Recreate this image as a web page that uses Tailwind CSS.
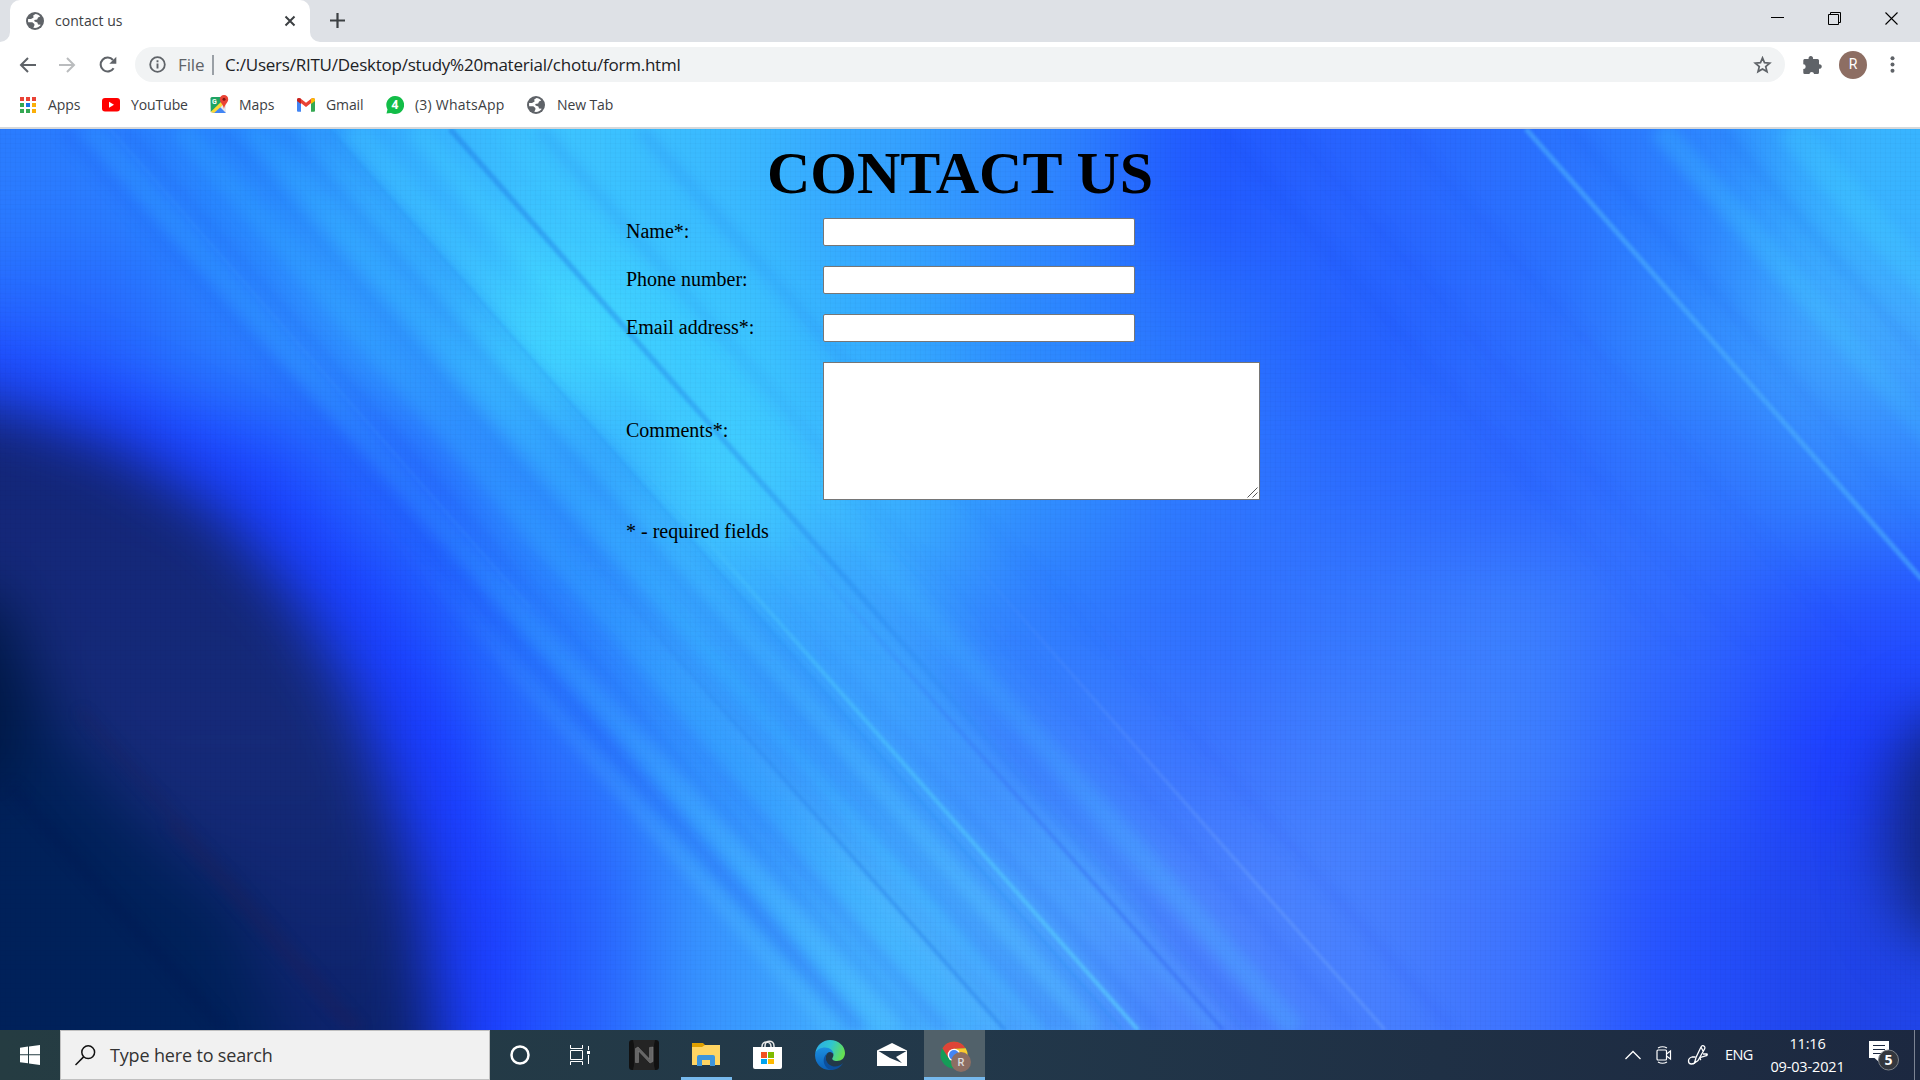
<!DOCTYPE html>
<html lang="en">
<head>
<meta charset="utf-8">
<title>contact us</title>
<script src="https://cdn.jsdelivr.net/npm/@tailwindcss/browser@4"></script>
</head>
<body class="w-[1920px] h-[1080px] overflow-hidden flex flex-col font-['Open_Sans',sans-serif] text-[#3c4043]">

<svg class="hidden">
  <symbol id="globe" viewBox="0 0 18 18">
    <circle cx="9" cy="9" r="9" fill="#5f6368"/>
    <path d="M9.5 2 7.2 3.6 7.6 5.4 5 7H2.1C2 8.2 2 9.2 2.2 10.2L6.3 10.3 8.4 12v1.6L7.3 15.8C10.6 16.4 13.4 15 14.8 12.8L12 12.4 11.4 10.4 8.6 9.6 8.2 8 11.2 7.4 12 5.6 14.2 4.4C13 3 11.3 2 9.5 2Z" fill="#fff"/>
  </symbol>
</svg>

<!-- Tab strip -->
<header class="h-[42px] shrink-0 bg-[#dee1e6] flex items-stretch justify-between">
  <div class="flex pl-[10px]">
    <div class="relative w-[300px] bg-white rounded-t-[10px] flex items-center pl-4 pr-[14px]">
      <svg class="absolute -left-[10px] bottom-0" width="10" height="10"><path d="M10 0V10H0A10 10 0 0 0 10 0Z" fill="#fff"/></svg>
      <svg class="absolute -right-[10px] bottom-0" width="10" height="10"><path d="M0 0V10H10A10 10 0 0 1 0 0Z" fill="#fff"/></svg>
      <svg width="18" height="18"><use href="#globe"/></svg>
      <span class="ml-[11px] -mt-[2px] text-[14px] tracking-[0.05px] whitespace-nowrap">contact us</span>
      <svg class="ml-auto" width="12" height="12" viewBox="0 0 12 12"><path d="M1.5 1.5l9 9M10.5 1.5l-9 9" stroke="#3c4043" stroke-width="2"/></svg>
    </div>
    <svg class="ml-5 mt-[13px]" width="15" height="15" viewBox="0 0 15 15"><path d="M7.5 0v15M0 7.5h15" stroke="#3c4043" stroke-width="2.2"/></svg>
  </div>
  <div class="flex gap-[44px] pr-[22px] pt-3">
    <svg width="13" height="13"><path d="M0 5.5h13" stroke="#000"/></svg>
    <svg width="13" height="13" fill="none" stroke="#000"><path d="M.5 2.5h10v10H.5zM2.500 2V.5h10v10H11"/></svg>
    <svg width="13" height="13" stroke="#000" stroke-width="1.1"><path d="M.5.5l12 12M12.5.5l-12 12"/></svg>
  </div>
</header>

<!-- Toolbar -->
<div class="h-[45px] shrink-0 bg-white flex items-center">
  <svg class="ml-[19px]" width="17" height="16" viewBox="0 0 17 16" fill="none" stroke="#5f6368" stroke-width="2"><path d="M17 8H2M9 1 2 8l7 7"/></svg>
  <svg class="ml-[23px]" width="17" height="16" viewBox="0 0 17 16" fill="none" stroke="#babcbe" stroke-width="2"><path d="M0 8h15M8 1l7 7-7 7"/></svg>
  <svg class="ml-[23px]" width="18" height="18" viewBox="0 0 18 18"><path d="M14.6 12.2A7 7 0 1 1 14 4" fill="none" stroke="#5f6368" stroke-width="2.1"/><path d="M17.3.8v7h-7z" fill="#5f6368"/></svg>
  <div class="ml-[18px] w-[1650px] h-[35px] rounded-full bg-[#f1f3f4] flex items-center pl-[14px] pr-[13px]">
    <svg width="17" height="17" viewBox="0 0 17 17"><circle cx="8.5" cy="8.5" r="7.3" fill="none" stroke="#5f6368" stroke-width="1.8"/><path d="M8.5 7.5v5M8.5 4.3v2" stroke="#5f6368" stroke-width="1.9"/></svg>
    <span class="ml-[12px] w-[26px] text-[17px] tracking-[-0.1px] text-[#5f6368]">File</span>
    <span class="ml-[8px] w-[2px] h-[20px] bg-[#9aa0a6]"></span>
    <span class="ml-[11px] text-[17px] tracking-[-0.230px] text-[#202124] whitespace-nowrap">C:/Users/RITU/Desktop/study%20material/chotu/form.html</span>
    <svg class="ml-auto" width="19" height="18" viewBox="0 0 19 18"><path d="M9.5 1.9 11.5 6.7l5.2.4-4 3.4 1.3 5.1-4.5-2.7L5 15.600l1.300-5.100-4-3.400 5.200-.4z" fill="none" stroke="#5f6368" stroke-width="1.7"/></svg>
  </div>
  <svg class="ml-[17px]" width="20" height="20" viewBox="0 0 20 20"><path d="M2 4h4.600a2.300 2.300 0 1 1 4.400 0h4.500a1.500 1.500 0 0 1 1.500 1.500v3.700a2.300 2.300 0 1 1 0 4.500v3.800a1.500 1.500 0 0 1-1.500 1.500h-3.400a2.400 2.400 0 0 0-4.700 0H3A1.500 1.500 0 0 1 1.300 17.500v-3.400a2.400 2.400 0 0 0 0-4.800V5.500A1.500 1.500 0 0 1 2.500 4z" fill="#5f6368"/></svg>
  <div class="ml-[17px] size-7 rounded-full bg-[#8d6e63] text-white text-[14px] font-['Roboto',sans-serif] flex items-center justify-center">R</div>
  <svg class="ml-[23px]" width="5" height="17" viewBox="0 0 5 17" fill="#5f6368"><circle cx="2.500" cy="2.200" r="2"/><circle cx="2.500" cy="8.500" r="2"/><circle cx="2.500" cy="14.800" r="2"/></svg>
</div>

<!-- Bookmarks -->
<nav class="h-[42px] shrink-0 bg-white border-b-2 border-[#d5d8db] flex items-center pb-[5px] pl-5 text-[14px] tracking-[-0.1px] whitespace-nowrap">
  <svg width="16" height="16" viewBox="0 0 16 16">
    <path d="M0 0h4v4H0zM6 0h4v4H6zM12 0h4v4h-4z" fill="#ea4335"/><path d="M0 6h4v4H0zM0 12h4v4H0zM6 12h4v4H6z" fill="#34a853"/><path d="M6 6h4v4H6z" fill="#1a73e8"/><path d="M12 6h4v4h-4zM12 12h4v4h-4z" fill="#fbaf08"/></svg>
  <span class="ml-3 w-[54px]">Apps</span>
  <svg width="18" height="14" viewBox="0 0 18 14"><rect width="18" height="13.500" rx="3" fill="#f00"/><path d="M7 3.800v6l5-3z" fill="#fff"/></svg>
  <span class="ml-[11px] w-[79px]">YouTube</span>
  <svg width="19" height="19" viewBox="0 0 19 19"><rect x=".5" y="2" width="15.500" height="16" rx="1.500" fill="#e8eaed"/><path d="M.5 3.500A1.500 1.500 0 0 1 2 2h9l2 6.500L.8 17z" fill="#1fa463"/><path d="M2.200 18 9 11l7 7z" fill="#4285f4"/><path d="M.6 17 12 6l2 3L4 18z" fill="#fdd835"/><text x="2" y="9" font-size="7" font-family="Roboto" font-weight="700" fill="#fff">G</text><path d="M14 0a4.200 4.200 0 0 1 4.200 4.400C18.200 7.500 14.800 8.500 14 14c-.8-5.500-4.200-6.500-4.200-9.600A4.200 4.200 0 0 1 14 0z" fill="#ea4335"/><circle cx="14" cy="4.300" r="1.500" fill="#811411"/></svg>
  <span class="ml-[10px] w-[58px]">Maps</span>
  <svg width="18" height="14" viewBox="0 0 18 14"><path d="M0 2v10.500c0 .8.500 1.300 1.300 1.300H4V5z" fill="#4285f4"/><path d="M18 2v10.500c0 .8-.5 1.300-1.300 1.300H14V5z" fill="#34a853"/><path d="M0 2C0 .2 2 -.5 3.500.6L9 4.800 14.500.6C16 -.5 18 .2 18 2L9 9z" fill="#ea4335"/><path d="M14 1v5.100l4-3V2C18 .2 16-.5 14.500.6z" fill="#fbbc04"/><path d="M0 2v1.100l4 3V1L3.500.6C2-.5 0 .2 0 2z" fill="#c5221f"/></svg>
  <span class="ml-[11px] w-[60px]">Gmail</span>
  <svg width="18" height="18" viewBox="0 0 18 18"><path d="M9 0a9 9 0 1 1-4 17L.5 17.500 1.500 13.500A9 9 0 0 1 9 0z" fill="#12bd48"/><text x="9" y="13.300" text-anchor="middle" font-size="12" font-family="Open Sans" font-weight="700" fill="#fff">4</text></svg>
  <span class="ml-[11px] w-[112px] tracking-[0.230px]">(3) WhatsApp</span>
  <svg width="18" height="18"><use href="#globe"/></svg>
  <span class="ml-[12px]">New Tab</span>
</nav>

<!-- Page -->
<main class="relative isolate h-[901px] shrink-0 overflow-hidden font-['Liberation_Serif',serif] text-black">
  <svg class="absolute inset-0 -z-10" width="1920" height="901" viewBox="0 0 1920 960" preserveAspectRatio="none">
    <defs>
      <filter id="soft" filterUnits="userSpaceOnUse" x="-400" y="-400" width="2720" height="1760" color-interpolation-filters="sRGB"><feGaussianBlur stdDeviation="52"/></filter>
      <filter id="b30" filterUnits="userSpaceOnUse" x="-300" y="-200" width="2500" height="1400" color-interpolation-filters="sRGB"><feGaussianBlur stdDeviation="32"/></filter>
      <filter id="b7" filterUnits="userSpaceOnUse" x="-900" y="-200" width="3200" height="1400" color-interpolation-filters="sRGB"><feGaussianBlur stdDeviation="6"/></filter>
      <filter id="b2" filterUnits="userSpaceOnUse" x="-900" y="-200" width="3200" height="1400" color-interpolation-filters="sRGB"><feGaussianBlur stdDeviation="1.600"/></filter>
      <linearGradient id="deep" x1="0" y1="0" x2="0" y2="1"><stop offset="0" stop-color="#13267a"/><stop offset=".5" stop-color="#152a78"/><stop offset="1" stop-color="#0a2168"/></linearGradient>
      <linearGradient id="bright" gradientUnits="userSpaceOnUse" x1="0" y1="0" x2="0" y2="960"><stop offset=".38" stop-color="#4cc8ff" stop-opacity="0"/><stop offset=".6" stop-color="#4cc8ff" stop-opacity=".6"/><stop offset="1" stop-color="#5ccfff" stop-opacity=".8"/></linearGradient>
      <linearGradient id="dim" gradientUnits="userSpaceOnUse" x1="0" y1="0" x2="0" y2="960"><stop offset="0" stop-color="#1f7ce8" stop-opacity=".8"/><stop offset=".5" stop-color="#1f7ce8" stop-opacity=".5"/><stop offset=".7" stop-color="#1f7ce8" stop-opacity=".15"/></linearGradient>
      <linearGradient id="down" x1="0" y1="0" x2="0" y2="1"><stop offset=".45" stop-color="#000"/><stop offset=".85" stop-color="#fff"/></linearGradient>
      <linearGradient id="up" x1="0" y1="0" x2="0" y2="1"><stop offset=".15" stop-color="#fff"/><stop offset=".6" stop-color="#000"/></linearGradient>
      <mask id="low" maskUnits="userSpaceOnUse" x="0" y="0" width="1920" height="960"><rect width="1920" height="960" fill="url(#down)"/></mask>
      <mask id="high" maskUnits="userSpaceOnUse" x="0" y="0" width="1920" height="960"><rect width="1920" height="960" fill="url(#up)"/></mask>
      <pattern id="weave" width="5" height="5" patternUnits="userSpaceOnUse"><path d="M0 .5h5M.5 0v5" stroke="#003" stroke-opacity=".025"/></pattern>
    </defs>
    <g id="mesh" filter="url(#soft)"></g>

    <!-- Soft diagonal bands -->
    <g mask="url(#high)"><g filter="url(#b7)" fill="none">
      <g stroke="#48dcff" stroke-opacity=".2">
        <path d="M352 0l793 960" stroke-width="26"/><path d="M415 0l793 960" stroke-width="22"/>
        <path d="M1660 0l793 960" stroke-width="24"/><path d="M1790 0l793 960" stroke-width="30"/>
      </g>
      <g stroke="#1440e8" stroke-opacity=".11" stroke-width="12">
        <path d="M540 0l793 960"/><path d="M640 0l793 960"/><path d="M1220 0l793 960"/><path d="M1290 0l793 960" stroke-opacity=".08"/><path d="M1400 0l793 960" stroke-opacity=".08"/><path d="M1570 0l793 960"/><path d="M1720 0l793 960"/>
      </g>
    </g></g>
    <g filter="url(#b7)" fill="none">
      <g stroke="#3fd8ff" stroke-opacity=".1">
        <path d="M250 0l793 960" stroke-width="14"/><path d="M180 0l793 960" stroke-width="22"/><path d="M90 0l793 960" stroke-width="18"/><path d="M500 0l793 960" stroke-width="18" stroke-opacity=".08"/>
      </g>
      <g stroke="#1440e8" stroke-opacity=".11" stroke-width="11">
        <path d="M62 0l793 960"/><path d="M125 0l793 960"/><path d="M220 0l793 960"/><path d="M282 0l793 960"/><path d="M322 0l793 960" stroke-width="8"/>
      </g>
    </g>
    <g mask="url(#low)"><g filter="url(#b7)" fill="none">
      <g stroke="#58c8ff" stroke-opacity=".24">
        <path d="M40 0l793 960" stroke-width="18"/><path d="M100 0l793 960" stroke-width="20"/><path d="M210 0l793 960" stroke-width="24"/><path d="M300 0l793 960" stroke-width="20"/><path d="M425 0l793 960" stroke-width="22" stroke-opacity=".16"/><path d="M505 0l793 960" stroke-width="24" stroke-opacity=".16"/>
      </g>
      <g stroke="#1c48f0" stroke-opacity=".17" stroke-width="11">
        <path d="M70 0l793 960"/><path d="M150 0l793 960"/><path d="M262 0l793 960"/><path d="M365 0l793 960"/><path d="M465 0l793 960"/><path d="M560 0l793 960" stroke-opacity=".12"/><path d="M660 0l793 960" stroke-opacity=".1"/>
      </g>
    </g></g>

    <!-- Dark corners -->
    <g filter="url(#b30)">
      <path d="M-200 240 0 262 125 316 235 390 320 490 378 600 418 700 452 820 470 1050H506L500 850 465 700 420 590 358 480 264 380 140 300 0 235-200 200Z" fill="#1838ff"/>
      <path d="M-200 275 0 294 118 338 222 410 300 505 352 600 388 700 422 820 448 1050H-200Z" fill="url(#deep)"/>
      <path d="M-200 460 0 500 60 640 160 760 240 830 300 1050H-200Z" fill="#00215a"/>
      <path d="M-100 500 0 500 30 620 0 700-100 700Z" fill="#001845"/>
      <ellipse cx="1950" cy="745" rx="62" ry="130" fill="#12257c"/>
    </g>
    <g filter="url(#b7)" fill="none" stroke-width="8">
      <path d="M80 620l281 340" stroke="#2a1c50" stroke-opacity=".18"/><path d="M170 740l182 220" stroke="#2a1c50" stroke-opacity=".25"/>
      <path d="M10 700l215 260" stroke="#001550" stroke-opacity=".4"/>
    </g>

    <!-- Fine rays -->
    <g filter="url(#b2)" fill="none">
      <path d="M450 0l793 960" stroke="url(#dim)" stroke-width="5.500" stroke-opacity=".6"/>
      <path d="M345 0l793 960" stroke="url(#bright)" stroke-width="4" stroke-opacity=".9"/>
      <path d="M1526 0l396 480" stroke="#4cb0ff" stroke-width="5" stroke-opacity=".6"/>
      <path d="M329 0l793 960" stroke="#2088f0" stroke-width="3" stroke-opacity=".22"/>
      <path d="M110 0l420 510" stroke="#48a0ff" stroke-width="2" stroke-opacity=".22"/>
      <g mask="url(#low)"><path d="M592 0l793 960" stroke="#70a8ff" stroke-width="3" stroke-opacity=".45"/>
      <path d="M212 0l793 960" stroke="#2478e8" stroke-width="4" stroke-opacity=".4"/>
      <path d="M430 0l793 960" stroke="#3060f0" stroke-width="4" stroke-opacity=".4"/></g>
    </g>
    <rect width="1920" height="960" fill="url(#weave)"/>
  </svg>

  <h1 class="pt-[10px] text-center text-[60px] leading-[69px] font-bold">CONTACT US</h1>
  <form class="ml-[626px] mt-[10px] grid grid-cols-[197px_437px] gap-y-5 items-center text-[20px] leading-[26px]">
    <label class="pb-[2px]" for="n">Name*:</label><input id="n" class="w-[312px] h-7 bg-white border border-[#767676] rounded-[2px]">
    <label class="pb-[2px]" for="p">Phone number:</label><input id="p" class="w-[312px] h-7 bg-white border border-[#767676] rounded-[2px]">
    <label class="pb-[2px]" for="e">Email address*:</label><input id="e" class="w-[312px] h-7 bg-white border border-[#767676] rounded-[2px]">
    <label class="pb-[2px]" for="c">Comments*:</label>
    <div class="relative"><textarea id="c" class="block w-[437px] h-[138px] bg-white border border-[#767676] resize-none"></textarea>
      <svg class="absolute right-[2px] bottom-[2px]" width="11" height="11"><path d="M.5 10.500l10-10M5.500 10.500l5-5" stroke="#555"/></svg></div>
    <p class="col-span-2 -mt-[2px]">* - required fields</p>
  </form>
</main>

<!-- Taskbar -->
<footer class="h-[50px] shrink-0 bg-linear-to-r from-[#253c42] via-[#22384a] via-50% to-[#1c2840] flex items-stretch text-white">
  <div class="w-[60px] flex items-center justify-center"><svg width="20" height="20" viewBox="0 0 20 20" fill="#fff"><path d="M0 2.700 8 1.500V9.300H0zM9 1.400 20 0v9.300H9zM0 10.300h8v8L0 17.200zM9 10.300h11V20L9 18.400z"/></svg></div>
  <div class="w-[430px] bg-[#f1f1f1] border border-[#c0c0c0] flex items-center pl-[14px]">
    <svg width="21" height="21" viewBox="0 0 21 21" fill="none" stroke="#111" stroke-width="1.500"><circle cx="13.200" cy="7.200" r="6.400"/><path d="M8.600 11.900.5 20"/></svg>
    <span class="ml-[14px] text-[18px] tracking-[-0.160px] text-[#333] whitespace-nowrap">Type here to search</span>
  </div>
  <div class="w-[60px] flex items-center justify-center"><svg width="20" height="20"><circle cx="10" cy="10" r="8.500" fill="none" stroke="#fff" stroke-width="2.500"/></svg></div>
  <div class="w-[63px] flex items-center pl-5"><svg width="20" height="20" viewBox="0 0 20 20" fill="none" stroke="#fff"><path d="M.5 0v3.500h12V0M.5 5.500h12v9H.5zM.5 20v-3.500h12V20M18.500 1v4M18.500 10v9"/><path d="M17 6h3v3h-3z" fill="#fff" stroke="none"/></svg></div>
  <div class="w-[62px] flex items-center justify-center"><svg width="30" height="30" viewBox="0 0 30 30"><rect width="30" height="30" rx="3" fill="#111"/><path d="M4 0h22l-1 5v20l1 5H4l1-5V5z" fill="#242424"/><path d="M6.500 22.500V8.500L9 7l11.500 12V7.500L24 7v14.500L21 23 9.500 11v11.500z" fill="#666" stroke="#888" stroke-width=".5"/></svg></div>
  <div class="relative w-[62px] flex justify-center pt-[13px]"><svg width="28" height="24" viewBox="0 0 28 24"><path d="M0 0h11l2 2v4H0z" fill="#dfa000"/><path d="M0 4h10l3-2h15v20H0z" fill="#ffd563"/><path d="M5 23v-9q0-2 2-2h14q2 0 2 2v9h-5v-6h-8v6z" fill="#3d95dc"/></svg><span class="absolute bottom-0 w-[51px] h-[3px] bg-[#76b9ed]"></span></div>
  <div class="w-[62px] flex pl-[16px] pt-[10px]"><svg width="29" height="30" viewBox="0 0 29 30"><path d="M9 8V6.500C9 .5 18 .5 18 6.500V8M12 8V6C12-.5 21-.5 21 6v2" fill="none" stroke="#e8e8e8" stroke-width="1.500"/><path d="M0 7h29v20q0 2-2 2H2q-2 0-2-2z" fill="#fff"/><path d="M8 12h6v6H8z" fill="#f25022"/><path d="M15 12h6v6h-6z" fill="#7fba00"/><path d="M8 19h6v5H8z" fill="#00a4ef"/><path d="M15 19h6v5h-6z" fill="#ffb900"/></svg></div>
  <div class="w-[62px] flex items-center justify-center"><svg width="30" height="30" viewBox="0 0 30 30"><defs><linearGradient id="eg" x1="0" y1=".2" x2="1" y2=".5"><stop offset="0" stop-color="#2ba9e8"/><stop offset=".5" stop-color="#30c6cf"/><stop offset="1" stop-color="#66e050"/></linearGradient><linearGradient id="eb" x1="0" y1="0" x2="0" y2="1"><stop offset="0" stop-color="#1c8fe0"/><stop offset="1" stop-color="#0b60b8"/></linearGradient></defs>
    <path d="M.3 13C1.500 5.500 7.500 0 15 0c8.500 0 15 6 15 13 0 5-3.500 8-8 8-3.500 0-5.500-1.500-4.500-3 2-3 1-6.500-3.500-7.500C9 9.500 3 10 .3 13z" fill="url(#eg)"/><path d="M.2 13.500C1.500 9.500 6 7.500 10 7.500c5 0 8.500 3 8.500 7-1-2.500-4-3.500-6-1.500-3 3-2.500 11 3.500 15.500V30C6 30.500-1 22.500.2 13.500z" fill="url(#eb)"/><path d="M12.500 13C9 17 11 24 17 26c4 1.300 8 0 11.200-3C25.500 27.500 21 30 16 30 8.500 28 6 18 12.500 13z" fill="#0c4f9c"/></svg></div>
  <div class="w-[62px] flex justify-center pt-[13px]"><svg width="30" height="24" viewBox="0 0 30 24"><path d="M0 7.500 15 0l15 7.500V23H0z" fill="#fff"/><path d="M1.500 8h28L19 14l6 6-12-5z" fill="#22384a"/></svg></div>
  <div class="relative ml-[1px] w-[61px] bg-[#51616a] flex justify-center pt-[11px]"><svg class="ml-[2px]" width="32" height="32" viewBox="0 0 32 32"><circle cx="14" cy="14" r="13.500" fill="#159c58"/><path d="M2.300 7.200A13.500 13.500 0 0 1 25.700 7.200L14 8 8.500 17z" fill="#de4437"/><path d="M25.700 7.200A13.500 13.500 0 0 1 14 27.500L19.500 16.500 14 7.800z" fill="#fbcb2e"/><circle cx="14" cy="14" r="6.300" fill="#fff"/><circle cx="14" cy="14" r="5" fill="#4485f4"/><circle cx="21" cy="21" r="10" fill="#8d6e63"/><text x="21" y="25" text-anchor="middle" font-size="11" font-weight="500" font-family="Roboto" fill="#ddd">R</text></svg><span class="absolute bottom-0 w-full h-[3px] bg-[#76b9ed]"></span></div>
  <div class="ml-auto flex items-center">
    <svg width="16" height="10" viewBox="0 0 16 10" fill="none" stroke="#fff" stroke-width="1.300"><path d="M.5 9 8 1.500 15.500 9"/></svg>
    <svg class="ml-[15px]" width="16" height="18" viewBox="0 0 16 18" fill="none" stroke="#fff" stroke-width="1.200"><rect x="1" y="4" width="9.500" height="10" rx="1"/><path d="M10.500 8 14.500 5v8l-4-3M2 2Q6.500-.5 11 2M2 16Q6.500 18.500 11 16"/></svg>
    <svg class="ml-[15px]" width="22" height="20" viewBox="0 0 22 20" fill="none" stroke="#fff" stroke-width="1.300"><path d="M7.500 18 9 12.500 14 2Q15.500-.3 17.500 1.500 18.500 3 17 5L11 15.500zM14 2l2.500 5"/><path d="M8.500 12H5Q1.500 13 1.500 16q0 3 3 3 3 0 4-2.500M16 9h4q1 1-1.500 2l-4 1q-2.500 1.500-.5 3"/></svg>
    <span class="ml-[16px] w-[31px] text-[14.500px] tracking-[-0.600px]">ENG</span>
    <div class="ml-[13px] w-[77px] text-center text-[14.500px] leading-[23px] tracking-[-0.150px] whitespace-nowrap">11:16<br>09-03-2021</div>
    <svg class="ml-[23px]" width="31" height="31" viewBox="0 0 31 31"><path d="M0 1h20v17H10v4l-4.500-4H0z" fill="#fff"/><path d="M4 5.500h12M4 9.500h12M4 13.500h8" stroke="#1c2840" stroke-width="1.200"/><circle cx="19.500" cy="20" r="10" fill="#34383f" stroke="#7d8288"/><text x="19.500" y="25" text-anchor="middle" font-size="14" font-weight="700" font-family="Open Sans" fill="#fff">5</text></svg>
    <span class="ml-[14px] mr-[5px] w-px h-[50px] bg-[#7c8493]"></span>
  </div>
</footer>

<script>
// Colour field of the wallpaper, 12 columns by 6 rows
const rows = [
  '2a7cff 2888ff 36b0ff 3cc4ff 3abaff 35a4ff 2f88ff 2058ff 2864ff 2a70ff 2c80ff 38b4ff',
  '2462ff 2b80ff 309aff 42dcff 3cc8ff 34acff 2c88ff 2a74ff 2460ff 2c6cff 3088ff 42a8ff',
  '1a38ff 1c48ff 2668ff 3098ff 42d2ff 3ab4ff 3090ff 2e78ff 2c6cff 2c66ff 3074ff 3284ff',
  '1838ff 1838ff 1e50ff 2a80ff 38a8ff 3ca4ff 2f7cff 2f70ff 3678ff 3c80ff 3068ff 2450ff',
  '1838ff 1838ff 1a3cff 2a70ff 3498ff 3ea4ff 3e84ff 3c74ff 4280ff 3e80ff 2c60ff 1c3cff',
  '1838ff 1838ff 1c38ff 2458ff 3898ff 46b4ff 4aa4ff 4c84ff 4880ff 3e74ff 2450ff 2044e8'
].map(r => r.split(' '));
const mesh = document.getElementById('mesh');
for (let j = -1; j <= 7; j++) for (let i = -1; i <= 12; i++) {
  const r = document.createElementNS('http://www.w3.org/2000/svg', 'rect');
  const c = rows[Math.min(5, Math.max(0, j))][Math.min(11, Math.max(0, i))];
  r.setAttribute('x', i * 160); r.setAttribute('y', j * 150);
  r.setAttribute('width', 161); r.setAttribute('height', 151);
  r.setAttribute('fill', '#' + c);
  mesh.appendChild(r);
}
</script>
</body>
</html>
